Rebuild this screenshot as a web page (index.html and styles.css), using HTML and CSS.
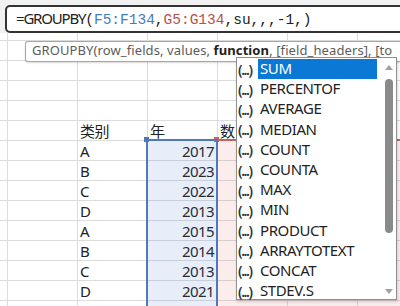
FILE: index.html
```html
<!DOCTYPE html>
<html lang="en">
  <head>
    <meta charset="UTF-8" />
    <meta name="viewport" content="width=device-width, initial-scale=1.0" />
    <title>GROUPBY</title>
    <link rel="stylesheet" href="styles.css">
  </head>
  <body>
    <div class="top">
      <div class="formula">
        <span class="fn">=GROUPBY</span><span class="code">(<span class="ref-a">F5:F134</span>,<span class="ref-b">G5:G134</span>,su,,,-1,)</span>
      </div>
    </div>

    <div class="sheet">
      <div class="row short"><i></i><i></i><i></i><i></i><i></i><i></i><i></i></div>
      <div class="row"><i></i><i></i><i></i><i></i><i></i><i></i><i></i></div>
      <div class="row"><i></i><i></i><i></i><i></i><i></i><i></i><i></i></div>
      <div class="row"><i></i><i></i><i></i><i></i><i></i><i></i><i></i></div>
      <div class="row"><i></i><i></i><i></i><i></i><i></i><i></i><i></i></div>
      <div class="row"><i></i><i></i><i>类别</i><i>年</i><i>数</i><i></i><i></i></div>
      <div class="row"><i></i><i></i><i>A</i><i class="num">2017</i><i></i><i></i><i></i></div>
      <div class="row"><i></i><i></i><i>B</i><i class="num">2023</i><i></i><i></i><i></i></div>
      <div class="row"><i></i><i></i><i>C</i><i class="num">2022</i><i></i><i></i><i></i></div>
      <div class="row"><i></i><i></i><i>D</i><i class="num">2013</i><i></i><i></i><i></i></div>
      <div class="row"><i></i><i></i><i>A</i><i class="num">2015</i><i></i><i></i><i></i></div>
      <div class="row"><i></i><i></i><i>B</i><i class="num">2014</i><i></i><i></i><i></i></div>
      <div class="row"><i></i><i></i><i>C</i><i class="num">2013</i><i></i><i></i><i></i></div>
      <div class="row"><i></i><i></i><i>D</i><i class="num">2021</i><i></i><i></i><i></i></div>
      <div class="row"><i></i><i></i><i></i><i></i><i></i><i></i><i></i></div>

      <div class="range red"><b></b></div>
      <div class="range blue"><b></b></div>
    </div>

    <div class="tip">GROUPBY(row_fields, values, <b>function</b>, [field_headers], [to</div>

    <div class="menu">
      <ul class="list">
        <li class="active"><span class="ico">(...)</span><span class="label">SUM</span></li>
        <li><span class="ico">(...)</span><span class="label">PERCENTOF</span></li>
        <li><span class="ico">(...)</span><span class="label">AVERAGE</span></li>
        <li><span class="ico">(...)</span><span class="label">MEDIAN</span></li>
        <li><span class="ico">(...)</span><span class="label">COUNT</span></li>
        <li><span class="ico">(...)</span><span class="label">COUNTA</span></li>
        <li><span class="ico">(...)</span><span class="label">MAX</span></li>
        <li><span class="ico">(...)</span><span class="label">MIN</span></li>
        <li><span class="ico">(...)</span><span class="label">PRODUCT</span></li>
        <li><span class="ico">(...)</span><span class="label">ARRAYTOTEXT</span></li>
        <li><span class="ico">(...)</span><span class="label">CONCAT</span></li>
        <li><span class="ico">(...)</span><span class="label">STDEV.S</span></li>
      </ul>
      <div class="scroll">
        <span class="arrow up"></span>
        <span class="thumb"></span>
        <span class="arrow down"></span>
      </div>
    </div>
  </body>
</html>
```

FILE: styles.css
```css
* {
  box-sizing: border-box;
}
body {
  margin: 0;
  width: 400px;
  height: 306px;
  overflow: hidden;
  position: relative;
  background: #fff;
  font-family: "Noto Sans", "Noto Sans CJK SC", sans-serif;
  color: #222;
}

/* formula bar */
.top {
  background: #f1f1f1;
  padding: 5px 0 0 5px;
  overflow: hidden;
}
.formula {
  height: 28px;
  margin-right: -6px;
  border: 2px solid #333;
  border-radius: 5px;
  background: #fff;
  padding-left: 9px;
  white-space: nowrap;
  line-height: 23px;
}
.fn {
  font-size: 15px;
  letter-spacing: -1.2px;
}
.code {
  font-family: "Liberation Mono", monospace;
  font-size: 14.5px;
}
.ref-a {
  color: #3f7cc0;
}
.ref-b {
  color: #b9504d;
}

/* grid */
.sheet {
  position: relative;
  height: 273px;
  overflow: hidden;
}
.row {
  display: grid;
  grid-template-columns: 8px repeat(6, 70px);
  height: 20px;
}
.row.short {
  height: 8px;
}
.row > i {
  font-style: normal;
  font-size: 15px;
  letter-spacing: -0.6px;
  line-height: 17px;
  padding: 2px 2px 0;
  border-right: 1px solid #dcdcdc;
  border-bottom: 1px solid #dcdcdc;
  white-space: nowrap;
  overflow: hidden;
}
.row > i.num {
  text-align: right;
  padding-right: 3px;
}

.range {
  position: absolute;
  top: 106px;
  height: 170px;
  border: 2px solid;
  border-bottom: 0;
}
.range > b {
  position: absolute;
  top: -4px;
  left: -4px;
  width: 5px;
  height: 5px;
  background: currentColor;
}
.range.blue {
  left: 146px;
  width: 72px;
  color: #4f78b8;
  background: rgba(70, 120, 205, 0.13);
}
.range.red {
  left: 216px;
  width: 184px;
  border-right: 0;
  color: #c8605e;
  background: rgba(225, 90, 90, 0.11);
}

/* function signature tip */
.tip {
  position: absolute;
  top: 41px;
  left: 25px;
  right: 0;
  height: 21px;
  border: 1px solid #a6a6a6;
  border-right: 0;
  border-radius: 3px 0 0 3px;
  background: #fff;
  box-shadow: 0 1px 2px rgba(0, 0, 0, 0.15);
  padding-left: 6px;
  font-size: 13px;
  line-height: 17px;
  letter-spacing: 0.1px;
  color: #5c5c5c;
  white-space: nowrap;
}
.tip b {
  color: #222;
}

/* autocomplete list */
.menu {
  position: absolute;
  top: 57px;
  left: 236px;
  width: 161px;
  height: 243px;
  border: 1px solid #8f8f8f;
  background: #fff;
  box-shadow: 1px 2px 3px rgba(0, 0, 0, 0.15);
  display: flex;
  padding-top: 1px;
}
.list {
  list-style: none;
  margin: 0;
  padding: 0;
  width: 140px;
}
.list li {
  display: flex;
  height: 20.2px;
  align-items: center;
}
.ico {
  width: 21px;
  padding-left: 1px;
  font-size: 14px;
  font-weight: 600;
  color: #333;
  letter-spacing: -1.4px;
}
.label {
  flex: 1;
  height: 100%;
  padding-left: 2px;
  font-size: 15px;
  line-height: 19px;
  letter-spacing: -0.4px;
}
.active .label {
  background: #0a78d4;
  color: #fff;
}
.scroll {
  flex: 1;
  display: flex;
  flex-direction: column;
  align-items: center;
  padding: 6px 0 5px 4px;
}
.arrow {
  width: 0;
  height: 0;
  border-left: 4px solid transparent;
  border-right: 4px solid transparent;
}
.arrow.up {
  border-bottom: 5px solid #a0a0a0;
}
.arrow.down {
  border-top: 5px solid #a0a0a0;
  margin-top: auto;
}
.thumb {
  width: 8px;
  height: 154px;
  margin-top: 9px;
  border-radius: 4px;
  background: #8a8a8a;
}
```
